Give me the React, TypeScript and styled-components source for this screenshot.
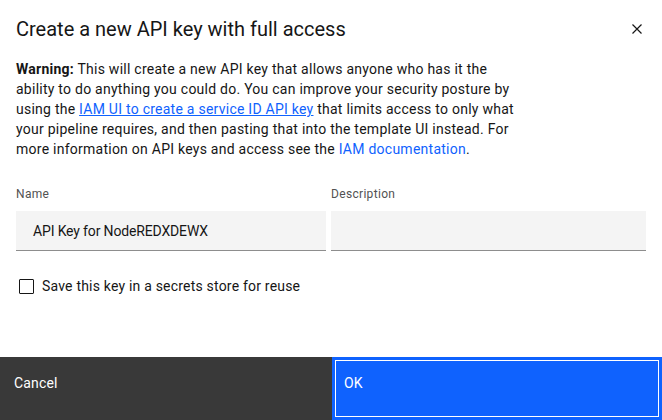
import React from "react";
import styled, { createGlobalStyle } from "styled-components";

const Global = createGlobalStyle`
  html, body { margin: 0; padding: 0; background: #fff; }
  body { font-family: Roboto, "Noto Sans", sans-serif; color: #161616; }
  #root { height: 420px; }
`;

const Modal = styled.div`
  height: 420px;
  width: 662px;
  display: flex;
  flex-direction: column;
  background: #fff;
`;

const Header = styled.div`
  display: flex;
  justify-content: space-between;
  align-items: flex-start;
  padding: 16px 16px 0 16px;
`;

const Title = styled.h2`
  margin: 0;
  font-family: Roboto, sans-serif;
  font-weight: 400;
  font-size: 20px;
  line-height: 26px;
  color: #161616;
`;

const Close = styled.button`
  border: 0;
  background: transparent;
  padding: 0;
  width: 20px;
  height: 20px;
  margin-top: 3px;
  margin-right: -1px;
  display: flex;
  align-items: center;
  justify-content: center;
  color: #161616;
`;

const Content = styled.div`
  padding: 17px 16px 0 16px;
`;

const Text = styled.p`
  margin: 0;
  font-family: Roboto, sans-serif;
  font-size: 14px;
  line-height: 20px;
  letter-spacing: 0.25px;
  color: #161616;
  white-space: nowrap;
`;

const Link = styled.a<{ $underline?: boolean }>`
  color: #0f62fe;
  text-decoration: ${(p) => (p.$underline ? "underline" : "none")};
`;

const Fields = styled.div`
  display: grid;
  grid-template-columns: 310px 1fr;
  column-gap: 5px;
  margin-top: 27px;
`;

const Field = styled.div`
  display: flex;
  flex-direction: column;
`;

const Label = styled.label`
  font-family: Roboto, sans-serif;
  font-size: 12px;
  line-height: 16px;
  letter-spacing: 0.32px;
  color: #525252;
  margin-bottom: 9px;
`;

const Input = styled.div`
  height: 39px;
  background: #f4f4f4;
  border-bottom: 1px solid #8d8d8d;
  display: flex;
  align-items: center;
  padding: 0 16px 0 17px;
  font-family: Roboto, sans-serif;
  font-size: 14px;
  letter-spacing: -0.15px;
  color: #161616;
`;

const CheckRow = styled.div`
  display: flex;
  align-items: center;
  gap: 8px;
  margin-top: 27px;
  padding-left: 3px;
  font-family: Roboto, sans-serif;
  font-size: 14px;
  letter-spacing: 0.2px;
  color: #161616;
`;

const Box = styled.span`
  width: 13px;
  height: 13px;
  border: 1px solid #161616;
  border-radius: 1px;
`;

const Spacer = styled.div`
  flex: 1;
`;

const Footer = styled.div`
  display: grid;
  grid-template-columns: 332px 1fr;
  height: 63px;
`;

const FooterButton = styled.button<{ $primary?: boolean }>`
  border: 0;
  margin: 0;
  text-align: left;
  display: flex;
  align-items: flex-start;
  padding: 18px 14px 0 ${(p) => (p.$primary ? "12px" : "14px")};
  font-family: Roboto, sans-serif;
  font-size: 14px;
  letter-spacing: 0.16px;
  color: #fff;
  background: ${(p) => (p.$primary ? "#0f62fe" : "#393939")};
  outline: ${(p) => (p.$primary ? "1px solid #fff" : "none")};
  outline-offset: -4px;
`;

export default function App() {
  return (
    <Modal>
      <Global />
      <Header>
        <Title>Create a new API key with full access</Title>
        <Close aria-label="Close">
          <svg width="12" height="12" viewBox="0 0 12 12">
            <path d="M1.5 1.5 L10.5 10.5 M10.5 1.5 L1.5 10.5" stroke="#161616" strokeWidth="1.2" />
          </svg>
        </Close>
      </Header>
      <Content>
        <Text>
          <strong>Warning:</strong> This will create a new API key that allows anyone who has it the
          <br />
          ability to do anything you could do. You can improve your security posture by
          <br />
          using the <Link $underline href="#">IAM UI to create a service ID API key</Link> that limits access to only what
          <br />
          your pipeline requires, and then pasting that into the template UI instead. For
          <br />
          more information on API keys and access see the <Link href="#">IAM documentation</Link>.
        </Text>
        <Fields>
          <Field>
            <Label>Name</Label>
            <Input>API Key for NodeREDXDEWX</Input>
          </Field>
          <Field>
            <Label>Description</Label>
            <Input />
          </Field>
        </Fields>
        <CheckRow>
          <Box />
          <span>Save this key in a secrets store for reuse</span>
        </CheckRow>
      </Content>
      <Spacer />
      <Footer>
        <FooterButton>Cancel</FooterButton>
        <FooterButton $primary>OK</FooterButton>
      </Footer>
    </Modal>
  );
}
